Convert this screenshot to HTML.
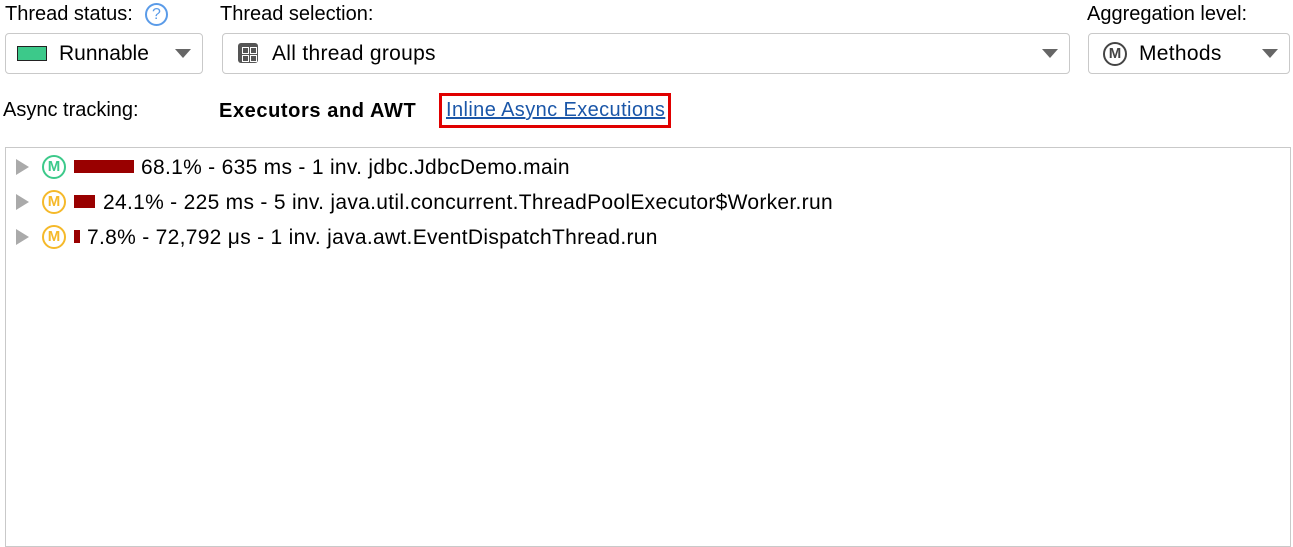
<!DOCTYPE html>
<html><head><style>
body{margin:0;width:1293px;height:525px;background:#fff;font-family:"Liberation Sans",sans-serif;font-size:20px;color:#000;position:relative;overflow:hidden}
.a{position:absolute;white-space:nowrap}
.r{font-size:21px;letter-spacing:0.3px}
.box{position:absolute;border:1px solid #c9c9c9;border-radius:4px;background:#fff;box-sizing:border-box}
.arr{position:absolute;width:0;height:0;border-left:8px solid transparent;border-right:8px solid transparent;border-top:9px solid #666}
.tri{position:absolute;width:0;height:0;border-top:8px solid transparent;border-bottom:8px solid transparent;border-left:13px solid #aaa}
.m{position:absolute;width:20px;height:20px;border-radius:50%;border:2.5px solid;font-size:15px;font-weight:bold;text-align:center;line-height:20px}
.bar{position:absolute;background:#990000;height:13px}
</style></head><body>
<div class="a" style="left:5px;top:3px">Thread status:</div>
<div class="a" style="left:145px;top:3px;width:19px;height:19px;border:2px solid #5a9be8;border-radius:50%;color:#5a9be8;font-size:16px;text-align:center;line-height:19px">?</div>
<div class="a" style="left:220px;top:3px">Thread selection:</div>
<div class="a" style="left:1087px;top:3px">Aggregation level:</div>

<div class="box" style="left:5px;top:33px;width:198px;height:41px"></div>
<div class="a" style="left:17px;top:46px;width:28px;height:13px;background:#3cc98a;border:1px solid #222"></div>
<div class="a r" style="left:59px;top:42px;letter-spacing:0">Runnable</div>
<div class="arr" style="left:175px;top:49px"></div>

<div class="box" style="left:222px;top:33px;width:848px;height:41px"></div>
<div class="a" style="left:238px;top:43px;width:20px;height:20px;background:#555;border-radius:3px"></div>
<div class="a" style="left:242px;top:47px;width:5px;height:5px;border:1px solid #fff"></div>
<div class="a" style="left:250px;top:47px;width:5px;height:5px;border:1px solid #fff"></div>
<div class="a" style="left:242px;top:55px;width:5px;height:5px;border:1px solid #fff"></div>
<div class="a" style="left:250px;top:55px;width:5px;height:5px;border:1px solid #fff"></div>
<div class="a r" style="left:272px;top:42px">All thread groups</div>
<div class="arr" style="left:1042px;top:49px"></div>

<div class="box" style="left:1088px;top:33px;width:202px;height:41px"></div>
<div class="m" style="left:1103px;top:42px;border-color:#444;color:#444">M</div>
<div class="a r" style="left:1139px;top:42px">Methods</div>
<div class="arr" style="left:1262px;top:49px"></div>

<div class="a" style="left:3px;top:99px">Async tracking:</div>
<div class="a" style="left:219px;top:100px;font-weight:bold;letter-spacing:0.6px">Executors and AWT</div>
<div class="a" style="left:439px;top:93px;width:226px;height:29px;border:3px solid #e00000"></div>
<div class="a" style="left:446px;top:99px;color:#1a56a8;text-decoration:underline;letter-spacing:0.4px">Inline Async Executions</div>

<div class="box" style="left:5px;top:147px;width:1286px;height:400px;border-radius:0"></div>

<div class="tri" style="left:16px;top:159px"></div>
<div class="m" style="left:42px;top:155px;border-color:#3cc98a;color:#3cc98a">M</div>
<div class="bar" style="left:74px;top:160px;width:60px"></div>
<div class="a r" style="left:141px;top:156px">68.1% - 635 ms - 1 inv. jdbc.JdbcDemo.main</div>

<div class="tri" style="left:16px;top:194px"></div>
<div class="m" style="left:42px;top:190px;border-color:#f5b92a;color:#f5b92a">M</div>
<div class="bar" style="left:74px;top:195px;width:21px"></div>
<div class="a r" style="left:103px;top:191px">24.1% - 225 ms - 5 inv. java.util.concurrent.ThreadPoolExecutor$Worker.run</div>

<div class="tri" style="left:16px;top:229px"></div>
<div class="m" style="left:42px;top:225px;border-color:#f5b92a;color:#f5b92a">M</div>
<div class="bar" style="left:74px;top:230px;width:6px"></div>
<div class="a r" style="left:87px;top:226px">7.8% - 72,792 μs - 1 inv. java.awt.EventDispatchThread.run</div>
</body></html>
